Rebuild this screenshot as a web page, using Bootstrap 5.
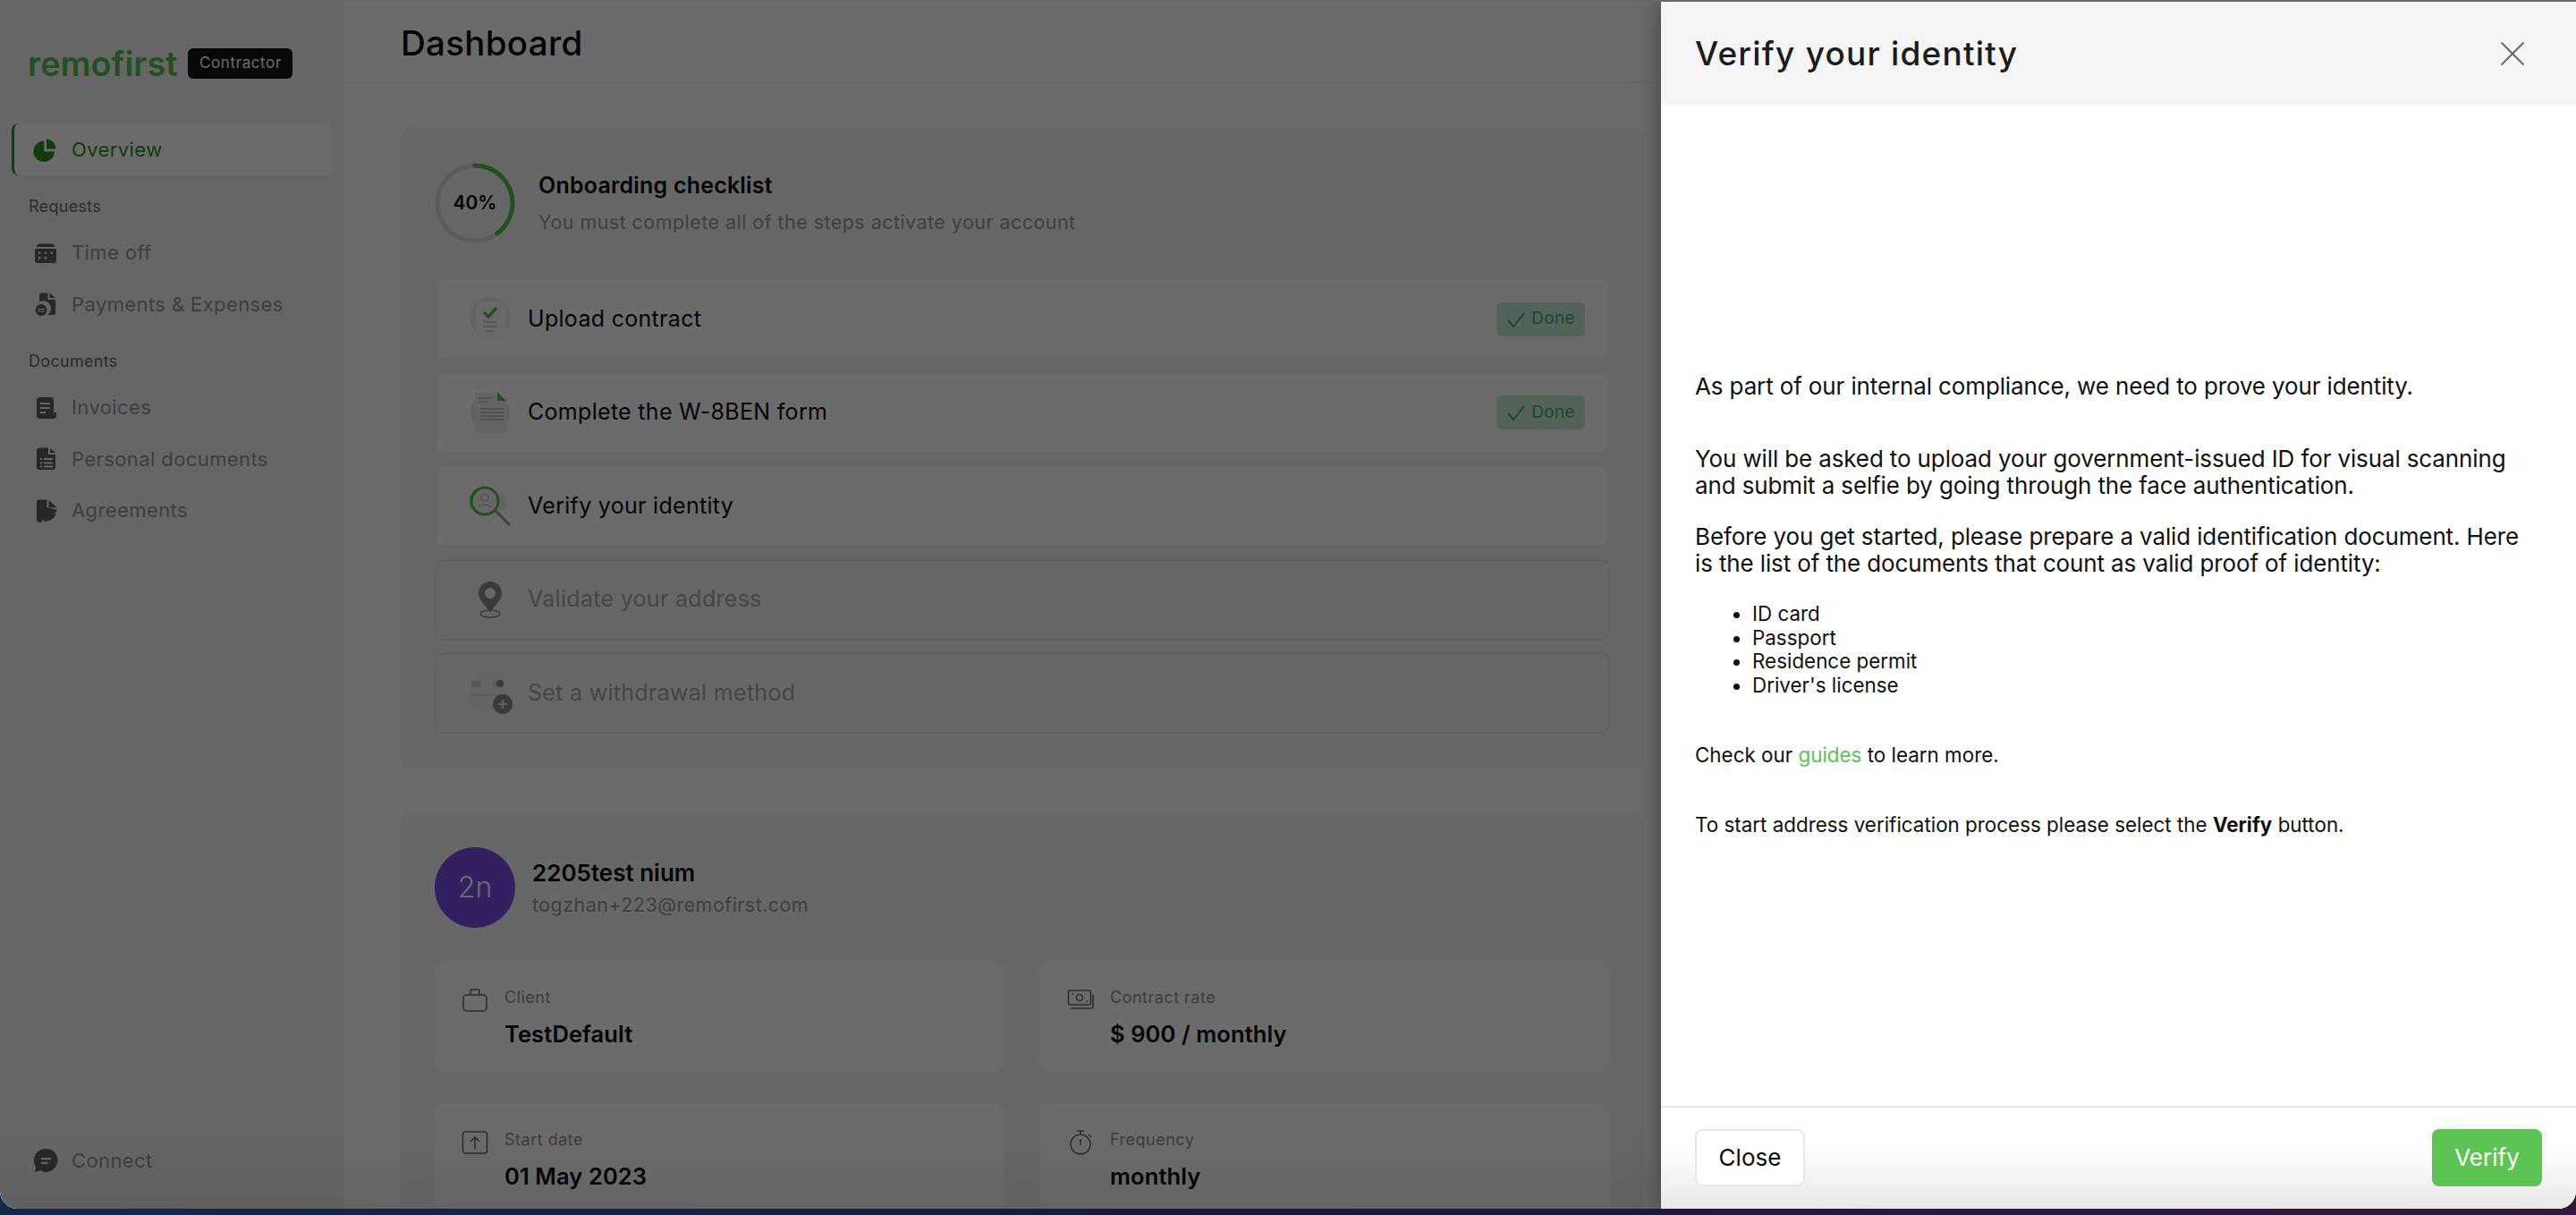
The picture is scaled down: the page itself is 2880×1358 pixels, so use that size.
<!doctype html>
<html lang="en">
<head>
<meta charset="utf-8">
<title>Dashboard</title>
<link href="https://cdn.jsdelivr.net/npm/bootstrap@5.3.0/dist/css/bootstrap.min.css" rel="stylesheet">
<style>
html,body{height:1358px;overflow:hidden}
body{font-family:Inter,"Liberation Sans",sans-serif;color:#0a0a0a;background:linear-gradient(90deg,#17284f 0%,#191a3a 45%,#32183a 100%)}
a{text-decoration:none}
.top-strip{height:2px;background:#66666e}
.app-window{position:relative;height:1349px;overflow:hidden;border-radius:0 0 20px 20px;background:#fff}
.app-window::after{content:"";position:absolute;left:0;right:0;bottom:0;height:90px;z-index:1042;pointer-events:none;background:linear-gradient(180deg,rgba(0,0,0,0),rgba(0,0,0,.06))}
.side-col{width:384px;flex:0 0 384px;height:1349px;background:#f3f3f3;padding:52px 13px 0}
.brand-row{height:34px;margin:0 0 50px 18px;gap:12px}
.brand-name{font-size:37.8px;line-height:34px;font-weight:600;color:#56bc4e}
.role-chip{width:117px;height:34px;border-radius:6px;background:#141414;color:#fff;font-size:17px;letter-spacing:.6px}
.menu-item{height:57.5px;padding-left:24px;gap:15px;font-size:22px;letter-spacing:.4px;color:#949494}
.menu-item svg{width:28px;height:28px;flex:none;fill:#5e5e5e}
.menu-active{height:58px;border-left:3px solid #2f8a28;border-radius:8px;background:#fff;color:#2e8e26;padding-left:21px}
.menu-active svg{fill:#2e8e26}
.menu-label{height:34px;margin:18px 0 6px 19px;font-size:18px;line-height:34px;letter-spacing:.3px;color:#666}
.side-end{height:25px;flex:none}
.main-col{height:1349px;min-width:0}
.page-head{height:91px;padding-left:64px;border-bottom:2px solid #eee;font-size:38.5px;line-height:92px;font-weight:500;letter-spacing:.3px}
.page-body{padding:50px 0 0 64px;width:1454px}
.panel{background:#f5f5f5;border-radius:14px;padding:39px 38px 39px;margin-bottom:49px}
.ring-box{position:relative;width:90px;height:90px;flex:none}
.ring-text{position:absolute;inset:0;font-size:21px;font-weight:600}
.panel-head{height:90px;margin-bottom:39px;gap:26px}
.panel-title{font-size:25px;line-height:30px;font-weight:600;letter-spacing:.2px;margin:-2px 0 13px}
.panel-sub{font-size:21.5px;line-height:26px;letter-spacing:.45px;color:#969696;margin:0}
.step-list{gap:13.5px}
.step-row{height:91px;border:2px solid #f0f0f0;border-radius:10px;background:#fff;padding:0 26px 0 32px;font-size:25px;letter-spacing:.3px;gap:14px}
.step-row svg{width:56px;height:56px;flex:none}
.step-off{background:transparent;border-color:#e6e6e6;color:#a6a6a6}
.done-tag{width:99px;height:38px;border-radius:6px;background:#c8ecd4;color:#42a868;font-size:19px;letter-spacing:.3px;gap:6px;justify-content:center}
.done-tag svg{width:22px;height:22px}
.person-head{height:90px;gap:19px;margin-bottom:38px}
.person-pic{width:90px;height:90px;flex:none;border-radius:50%;background:#7a4ee6;color:#fff;font-size:32px;font-weight:300}
.person-name{font-size:26px;line-height:30px;font-weight:600;margin:0 0 7px}
.person-mail{font-size:21.5px;line-height:26px;letter-spacing:.45px;color:#969696;margin:0}
.facts{display:grid;grid-template-columns:637px 637px;column-gap:40px;row-gap:37px}
.fact-card{height:122px;background:#fff;border-radius:12px;padding:28px 30px;gap:18px}
.fact-card svg{width:30px;height:30px;flex:none;fill:none;stroke:#6c6c6c;stroke-width:1.6}
.fact-label{font-size:18px;line-height:24px;color:#909090;letter-spacing:.5px;margin:0 0 14px}
.fact-value{font-size:25.5px;line-height:30px;font-weight:600;letter-spacing:.1px;margin:0}
.page-dim.offcanvas-backdrop{position:absolute;left:0;top:0;width:100%;height:100%;opacity:.58}
.verify-drawer.offcanvas.offcanvas-end{position:absolute;top:0;bottom:0;right:0;width:1023px;height:1349px;border:0;transition:none;box-shadow:0 0 26px rgba(0,0,0,.4)}
.drawer-head.offcanvas-header{height:115px;padding:0 57px 0 38px;background:#f5f5f5}
.drawer-title{font-size:37px;line-height:44px;font-weight:500;letter-spacing:1.2px;color:#1c1c1c;margin:0}
.x-btn{width:28px;height:28px;line-height:0}
.x-btn svg{width:28px;height:28px;stroke:#666;stroke-width:2;fill:none}
.drawer-main.offcanvas-body{padding:0 38px;overflow:hidden}
.intro-text{font-size:26px;line-height:30px;letter-spacing:-.13px;color:#111;margin:0}
.gap-big{margin-top:51px}
.gap-mid{margin-top:27px}
.doc-list{margin:28px 0 0;padding-left:64px;font-size:22.4px;line-height:26.4px;color:#111}
.small-text{font-size:22.4px;line-height:26.4px;color:#111;margin:52px 0 0}
.guide-link{color:#5cc452}
.drawer-foot{height:115px;flex:none;border-top:2px solid #e6e6e6;padding:24px 38px 0;background:linear-gradient(180deg,#fff 40%,#e8e8e8 100%)}
.foot-btn{width:123px;height:64px;border-radius:8px;font-size:26px;padding:0;line-height:1}
.btn-plain{border:2px solid #e8e8e8;background:#fff;color:#0a0a0a}
.btn-green{border:0;background:#5cc452;color:#fff}
</style>
</head>
<body>
<div class="top-strip"></div>
<div class="app-window d-flex">
  <aside class="side-col d-flex flex-column">
    <div class="brand-row d-flex align-items-center">
      <span class="brand-name">remofirst</span>
      <span class="role-chip d-flex align-items-center justify-content-center">Contractor</span>
    </div>
    <a class="menu-item menu-active d-flex align-items-center">
      <svg viewBox="0 0 28 28"><path d="M12.4 4.5v11.7h11.6A11.8 11.8 0 1 1 12.4 4.5z"/><path d="M15 2.4a11 11 0 0 1 10.6 11H15z"/></svg>Overview</a>
    <div class="menu-label">Requests</div>
    <a class="menu-item d-flex align-items-center">
      <svg viewBox="0 0 28 28"><path d="M4 7a3.5 3.5 0 0 1 3.5-3.5h13A3.5 3.5 0 0 1 24 7H4z"/><path fill-rule="evenodd" d="M2 9h24v13a3 3 0 0 1-3 3H5a3 3 0 0 1-3-3V9zM6 12.400h2.400v2.400H6zM12.800 12.400h2.400v2.400h-2.400zM19.600 12.400H22v2.400h-2.400zM6 18h2.400v2.400H6zM12.800 18h2.400v2.400h-2.400z"/></svg>Time off</a>
    <a class="menu-item d-flex align-items-center">
      <svg viewBox="0 0 28 28"><path d="M7 1.500h9.500v7.500H25v15a2 2 0 0 1-2 2h-7a8.500 8.500 0 0 0-9-14.500V3.500a2 2 0 0 1 2-2z"/><path d="M18.500 1.500 25 7h-6.500z"/><path fill-rule="evenodd" d="M9 14a6.500 6.500 0 1 1 0 13 6.500 6.500 0 0 1 0-13zm-4 6h8v-1H5zm0 2.500h8v-1H5z"/></svg>Payments &amp; Expenses</a>
    <div class="menu-label">Documents</div>
    <a class="menu-item d-flex align-items-center">
      <svg viewBox="0 0 28 28"><path fill-rule="evenodd" d="M7 2h13a3 3 0 0 1 3 3v14h3v4a3 3 0 0 1-3 3H7a3 3 0 0 1-3-3V5a3 3 0 0 1 3-3zm1 6v2h11V8zm0 5v2h11v-2zm0 5v2h6v-2z"/></svg>Invoices</a>
    <a class="menu-item d-flex align-items-center">
      <svg viewBox="0 0 28 28"><path fill-rule="evenodd" d="M7 1.500h10V9h8v14a3 3 0 0 1-3 3H7a3 3 0 0 1-3-3V4.500a3 3 0 0 1 3-3zM8 13v2h2v-2zm4 0v2h10v-2zm-4 4.500v2h2v-2zm4 0v2h10v-2zm-4 4v2h2v-2zm4 0v2h10v-2z"/><path d="M19 2l6 5h-6z"/></svg>Personal documents</a>
    <a class="menu-item d-flex align-items-center">
      <svg viewBox="0 0 28 28"><path d="M6 1.500h9.500V10L27 13l-2 3-15 9v1.500H6a2 2 0 0 1-2-2v-21a2 2 0 0 1 2-2z"/><path d="M17.500 2 27 10.500h-9.500z"/><path d="M12 26c1-5 6-8 14-9-2 5-7 9-14 9z"/></svg>Agreements</a>
    <a class="menu-item d-flex align-items-center mt-auto">
      <svg viewBox="0 0 28 28"><path fill-rule="evenodd" d="M14.500 1A13 13 0 1 1 8 25.300L1.500 27l1.700-5.600A13 13 0 0 1 14.500 1zM9 11v2.200h11V11zm0 4.800V18h7.500v-2.200z"/></svg>Connect</a>
    <div class="side-end"></div>
  </aside>
  <main class="main-col flex-grow-1">
    <h1 class="page-head m-0">Dashboard</h1>
    <div class="page-body">
      <section class="panel">
        <div class="panel-head d-flex align-items-center">
          <div class="ring-box">
            <svg width="90" height="90" viewBox="0 0 90 90"><circle cx="45" cy="45" r="42" fill="none" stroke="#d8d8d8" stroke-width="5"/><circle cx="45" cy="45" r="42" fill="none" stroke="#56bc4e" stroke-width="5" stroke-linecap="round" stroke-dasharray="105.500 264" transform="rotate(-90 45 45)"/></svg>
            <div class="ring-text d-flex align-items-center justify-content-center">40%</div>
          </div>
          <div>
            <h2 class="panel-title">Onboarding checklist</h2>
            <p class="panel-sub">You must complete all of the steps activate your account</p>
          </div>
        </div>
        <div class="step-list d-flex flex-column">
          <div class="step-row d-flex align-items-center">
            <svg viewBox="0 0 56 56"><circle cx="28" cy="26" r="23" fill="#ececec"/><rect x="12" y="8" width="33" height="42" fill="#fafafa"/><path d="M21 20l5 5 9-10" fill="none" stroke="#56bc4e" stroke-width="3.500"/><path d="M20 31h16M20 36h16M24 41h8" stroke="#cfcfcf" stroke-width="2"/></svg>
            <span class="flex-grow-1">Upload contract</span>
            <span class="done-tag d-flex align-items-center"><svg viewBox="0 0 22 22"><path d="M2 12l6 7L20 4" fill="none" stroke="#42a868" stroke-width="2"/></svg>Done</span>
          </div>
          <div class="step-row d-flex align-items-center">
            <svg viewBox="0 0 56 56"><circle cx="28" cy="29" r="22" fill="#e6e6e6"/><path d="M11 6h26l9 9v36H11z" fill="#efefef"/><path d="M36 5l10 10H36z" fill="#56bc4e"/><path d="M15 12h14M15 16h9M17 24h27M17 28h27M17 32h27M17 36h27" stroke="#b4b4b4" stroke-width="1.500" fill="none"/></svg>
            <span class="flex-grow-1">Complete the W-8BEN form</span>
            <span class="done-tag d-flex align-items-center"><svg viewBox="0 0 22 22"><path d="M2 12l6 7L20 4" fill="none" stroke="#42a868" stroke-width="2"/></svg>Done</span>
          </div>
          <div class="step-row d-flex align-items-center">
            <svg viewBox="0 0 56 56"><rect x="4" y="14" width="42" height="18" rx="5" fill="#ededed"/><circle cx="22" cy="22" r="15" fill="#f5f5f5" stroke="#56bc4e" stroke-width="3"/><circle cx="22" cy="18" r="4" fill="none" stroke="#cfcfcf" stroke-width="2"/><path d="M15 29c3-4 11-4 14 0" stroke="#cfcfcf" stroke-width="2" fill="none"/><path d="M34 33l15 15" stroke="#a4a4a4" stroke-width="3.500" stroke-linecap="round"/></svg>
            <span class="flex-grow-1">Verify your identity</span>
          </div>
          <div class="step-row step-off d-flex align-items-center">
            <svg viewBox="0 0 56 56"><circle cx="15" cy="16" r="8" fill="#f3f3f3"/><circle cx="46" cy="26" r="8" fill="#f3f3f3"/><circle cx="17" cy="34" r="10" fill="#f3f3f3"/><circle cx="40" cy="36" r="10" fill="#f3f3f3"/><ellipse cx="28" cy="44" rx="11" ry="4" fill="none" stroke="#8a8a8a" stroke-width="1.500"/><path fill="#8a8a8a" fill-rule="evenodd" d="M28 8a13 13 0 0 1 13 13c0 8-7 12-13 22-6-10-13-14-13-22A13 13 0 0 1 28 8zm0 7a6 6 0 1 0 0 12 6 6 0 0 0 0-12z"/></svg>
            <span class="flex-grow-1">Validate your address</span>
          </div>
          <div class="step-row step-off d-flex align-items-center">
            <svg viewBox="0 0 56 56"><circle cx="26" cy="26" r="23" fill="#f0f0f0"/><rect x="7" y="14" width="10" height="7" fill="#cfcfcf"/><circle cx="34" cy="17" r="4" fill="#dcdcdc"/><circle cx="39" cy="17" r="4" fill="#8a8a8a"/><path d="M6 30h34" stroke="#d4d4d4" stroke-width="2" stroke-dasharray="6 3"/><circle cx="42" cy="40" r="11" fill="#8a8a8a"/><path d="M42 35v10M37 40h10" stroke="#ddd" stroke-width="2.400"/></svg>
            <span class="flex-grow-1">Set a withdrawal method</span>
          </div>
        </div>
      </section>
      <section class="panel">
        <div class="person-head d-flex align-items-center">
          <div class="person-pic d-flex align-items-center justify-content-center">2n</div>
          <div>
            <p class="person-name">2205test nium</p>
            <p class="person-mail">togzhan+223@remofirst.com</p>
          </div>
        </div>
        <div class="facts">
          <div class="fact-card d-flex">
            <svg viewBox="0 0 30 30"><rect x="2" y="9" width="26" height="18" rx="4"/><path d="M10 9V4.500A1.500 1.500 0 0 1 11.500 3h7A1.500 1.500 0 0 1 20 4.500V9"/></svg>
            <div><p class="fact-label">Client</p><p class="fact-value">TestDefault</p></div>
          </div>
          <div class="fact-card d-flex">
            <svg viewBox="0 0 30 30"><rect x="1.500" y="4" width="25" height="16" rx="2"/><circle cx="14" cy="12" r="3.500"/><path d="M5 8h2M21 16h2M4 24h23a2 2 0 0 0 2-2V9"/></svg>
            <div><p class="fact-label">Contract rate</p><p class="fact-value">$ 900 / monthly</p></div>
          </div>
          <div class="fact-card d-flex">
            <svg viewBox="0 0 30 30"><rect x="1.500" y="3" width="27" height="24" rx="3"/><path d="M15 22V9M10 14l5-5 5 5"/></svg>
            <div><p class="fact-label">Start date</p><p class="fact-value">01 May 2023</p></div>
          </div>
          <div class="fact-card d-flex">
            <svg viewBox="0 0 30 30"><circle cx="15" cy="17" r="11"/><path d="M11 2h8M15 2v4M15 11v7M24 6l3 3"/></svg>
            <div><p class="fact-label">Frequency</p><p class="fact-value">monthly</p></div>
          </div>
        </div>
      </section>
    </div>
  </main>
  <div class="page-dim offcanvas-backdrop show"></div>
  <div class="verify-drawer offcanvas offcanvas-end show d-flex flex-column" data-bs-backdrop="false" data-bs-scroll="true" tabindex="-1">
    <div class="drawer-head offcanvas-header">
      <h5 class="drawer-title">Verify your identity</h5>
      <button class="x-btn btn border-0 p-0" type="button" aria-label="Close"><svg viewBox="0 0 28 28"><path d="M1.500 1.500l25 25M26.500 1.500l-25 25"/></svg></button>
    </div>
    <div class="drawer-main offcanvas-body d-flex flex-column justify-content-center">
      <p class="intro-text">As part of our internal compliance, we need to prove your identity.</p>
      <p class="intro-text gap-big">You will be asked to upload your government-issued ID for visual scanning and submit a selfie by going through the face authentication.</p>
      <p class="intro-text gap-mid">Before you get started, please prepare a valid identification document. Here is the list of the documents that count as valid proof of identity:</p>
      <ul class="doc-list">
        <li>ID card</li>
        <li>Passport</li>
        <li>Residence permit</li>
        <li>Driver's license</li>
      </ul>
      <p class="small-text">Check our <a class="guide-link" href="#">guides</a> to learn more.</p>
      <p class="small-text">To start address verification process please select the <b>Verify</b> button.</p>
    </div>
    <div class="drawer-foot d-flex justify-content-between align-items-start">
      <button class="foot-btn btn-plain btn" type="button">Close</button>
      <button class="foot-btn btn-green btn" type="button">Verify</button>
    </div>
  </div>
</div>
<script src="https://cdn.jsdelivr.net/npm/bootstrap@5.3.0/dist/js/bootstrap.bundle.min.js"></script>
</body>
</html>
